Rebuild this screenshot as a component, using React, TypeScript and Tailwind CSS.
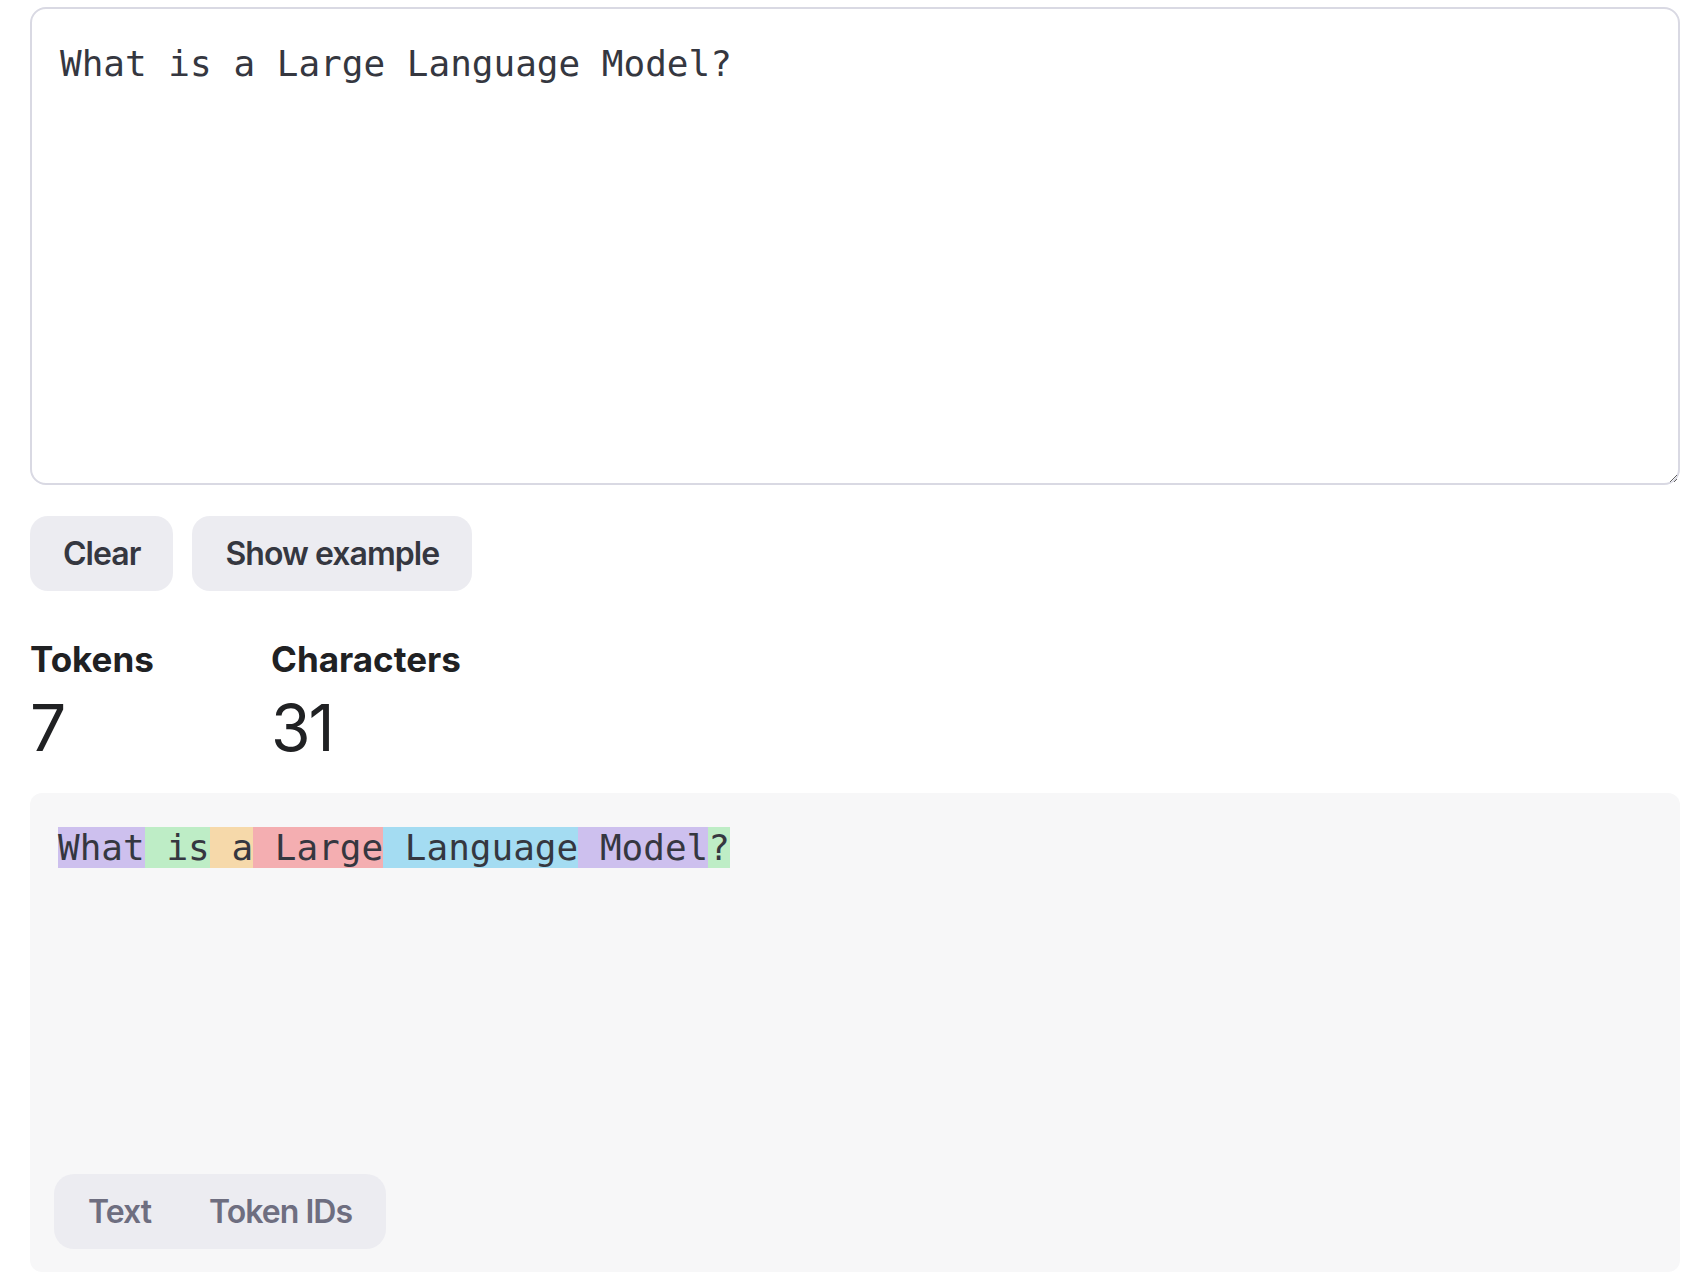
import { useState } from "react";

const TOKENS: { text: string; color: string }[] = [
  { text: "What", color: "bg-[#cdc0ee]" },
  { text: " is", color: "bg-[#beedc6]" },
  { text: " a", color: "bg-[#f6d9aa]" },
  { text: " Large", color: "bg-[#f4aeb1]" },
  { text: " Language", color: "bg-[#a4dcf2]" },
  { text: " Model", color: "bg-[#cdc0ee]" },
  { text: "?", color: "bg-[#beedc6]" },
];

export default function App() {
  const [text, setText] = useState("What is a Large Language Model?");
  const [view, setView] = useState<"text" | "ids">("text");

  return (
    <div className="min-h-screen bg-white font-['Inter',sans-serif] text-[#353740]">
      <div className="ml-[30px] w-[1650px] pt-[7px]">
        <textarea
          value={text}
          onChange={(e) => setText(e.target.value)}
          className="block h-[478px] w-full rounded-[16px] border-2 border-[#d9d9e3] bg-white p-7 font-['DejaVu_Sans_Mono',monospace] text-[36px] leading-[54px] text-[#353740] outline-none"
        />

        <div className="mt-[31px] flex gap-[19px]">
          <button className="h-[75px] rounded-[18px] bg-[#ececf1] px-[33px] text-[32px] font-semibold tracking-[-0.03em] text-[#353740]">
            Clear
          </button>
          <button className="h-[75px] rounded-[18px] bg-[#ececf1] px-[33px] text-[32px] font-semibold tracking-[-0.03em] text-[#353740]">
            Show example
          </button>
        </div>

        <div className="mt-[44px] flex text-[#202123]">
          <div className="w-[241px]">
            <div className="text-[35px] font-bold leading-[48px]">Tokens</div>
            <div className="mt-[13px] text-[64px] leading-[64px] tracking-[-0.03em]">7</div>
          </div>
          <div>
            <div className="text-[35px] font-bold leading-[48px]">Characters</div>
            <div className="mt-[13px] text-[64px] leading-[64px] tracking-[-0.03em]">{text.length}</div>
          </div>
        </div>

        <div className="mt-[33px] flex h-[479px] flex-col rounded-[12px] bg-[#f7f7f8] px-7 pt-7 pb-[23px]">
          <div className="whitespace-pre-wrap font-['DejaVu_Sans_Mono',monospace] text-[36px] leading-[54px] text-[#353740]">
            {view === "text"
              ? TOKENS.map((t, i) => (
                  <span key={i} className={t.color}>
                    {t.text}
                  </span>
                ))
              : "[4827, 382, 264, 20902, 11688, 5008, 30]"}
          </div>
          <div className="-ml-1 mt-auto flex w-fit rounded-[20px] bg-[#ececf1] p-[5px]">
            <button
              onClick={() => setView("text")}
              className="h-[65px] rounded-[16px] px-[29px] text-[32px] font-semibold tracking-[-0.03em] text-[#6e6e80]"
            >
              Text
            </button>
            <button
              onClick={() => setView("ids")}
              className="h-[65px] rounded-[16px] px-[29px] text-[32px] font-semibold tracking-[-0.03em] text-[#6e6e80]"
            >
              Token IDs
            </button>
          </div>
        </div>
      </div>
    </div>
  );
}
